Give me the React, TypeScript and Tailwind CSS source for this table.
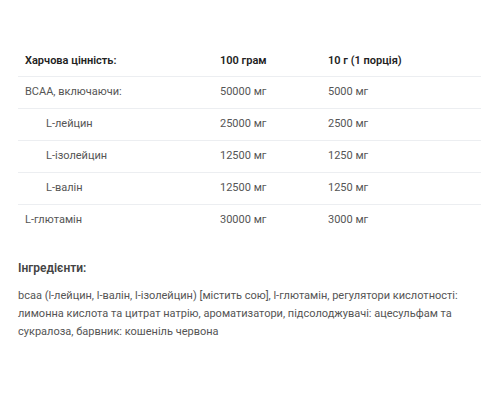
import React from 'react';

const rows = [
  { name: 'BCAA, включаючи:', a: '50000 мг', b: '5000 мг', sub: false },
  { name: 'L-лейцин', a: '25000 мг', b: '2500 мг', sub: true },
  { name: 'L-ізолейцин', a: '12500 мг', b: '1250 мг', sub: true },
  { name: 'L-валін', a: '12500 мг', b: '1250 мг', sub: true },
  { name: 'L-глютамін', a: '30000 мг', b: '3000 мг', sub: false },
];

export default function App() {
  return (
    <div className="w-[500px] h-[400px] bg-white px-[18px] pt-[46px] font-['Roboto',sans-serif] text-[11px] text-[#555]">
      <table className="w-[463px] border-collapse">
        <thead>
          <tr className="h-[30px] border-b border-[#eceef1] text-[#222] font-semibold">
            <td className="w-[195px] pl-[7px]">Харчова цінність:</td>
            <td className="w-[108px] pl-[7px]">100 грам</td>
            <td className="pl-[7px]">10 г (1 порція)</td>
          </tr>
        </thead>
        <tbody>
          {rows.map((r, i) => (
            <tr key={i} className={`h-[32px] ${i < rows.length - 1 ? 'border-b border-[#eceef1]' : ''}`}>
              <td className={r.sub ? 'pl-[28px]' : 'pl-[7px]'}>{r.name}</td>
              <td className="pl-[7px]">{r.a}</td>
              <td className="pl-[7px]">{r.b}</td>
            </tr>
          ))}
        </tbody>
      </table>
      <h3 className="mt-[23px] text-[12px] font-semibold text-[#444]">Інгредієнти:</h3>
      <p className="mt-[10px] leading-[18px]">
        bcaa (l-лейцин, l-валін, l-ізолейцин) [містить сою], l-глютамін, регулятори кислотності: лимонна кислота та цитрат натрію, ароматизатори, підсолоджувачі: ацесульфам та сукралоза, барвник: кошеніль червона
      </p>
    </div>
  );
}
